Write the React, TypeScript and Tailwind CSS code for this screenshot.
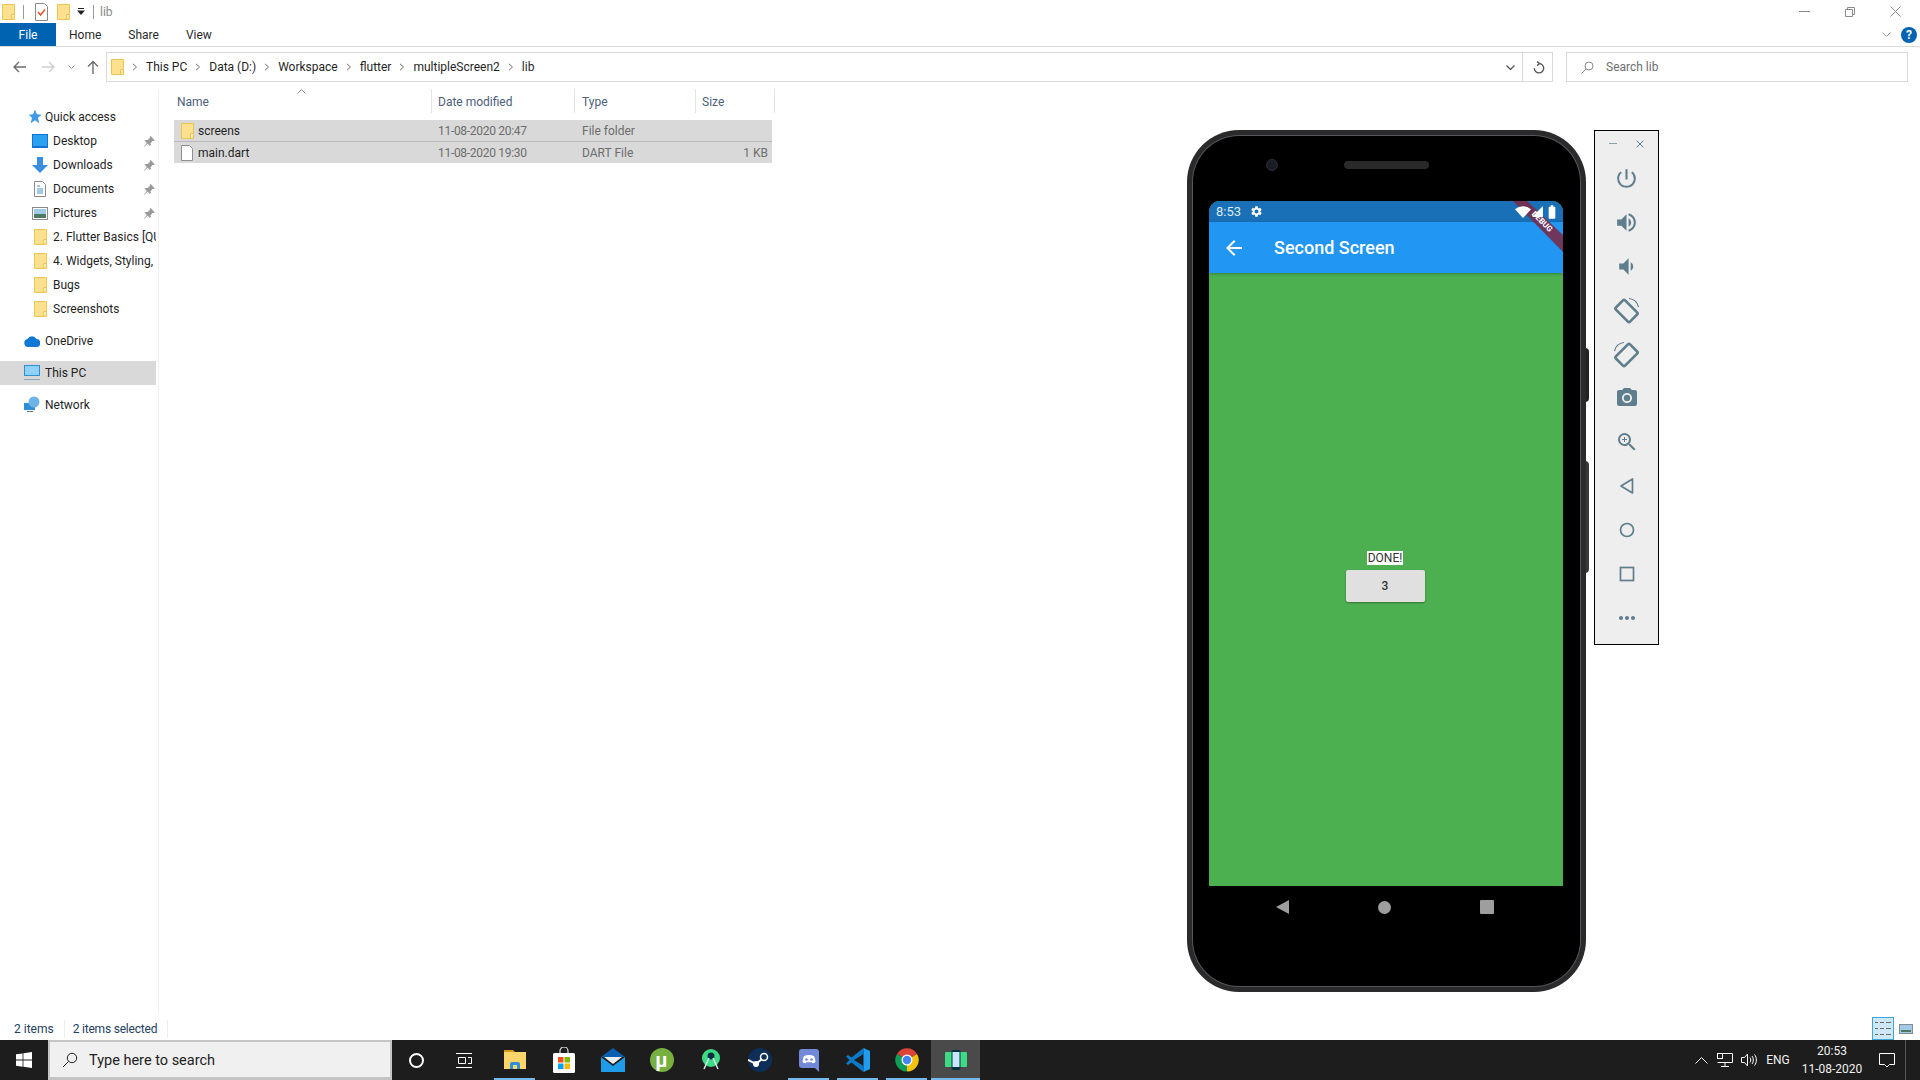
import type { ReactNode } from "react";
import {
  MdArrowBack,
  MdBatteryFull,
  MdCameraAlt,
  MdMoreHoriz,
  MdPowerSettingsNew,
  MdSettings,
  MdSignalCellular4Bar,
  MdVolumeDown,
  MdVolumeUp,
  MdZoomIn,
} from "react-icons/md";

const Folder = () => (
  <svg width="13" height="16" viewBox="0 0 13 16" className="shrink-0">
    <path d="M.5.5h12v15H.5z" fill="#ffe08f" stroke="#ebc452" />
    <path d="M9.5 15.5v-5h3" fill="#fff1c4" stroke="#ebc452" />
  </svg>
);

const FileIcon = () => (
  <svg width="12" height="16" viewBox="0 0 12 16" className="shrink-0">
    <path d="M.5.5h8l3 3v12H.5z" fill="#fff" stroke="#8f8f8f" />
  </svg>
);

const Pin = () => (
  <svg width="13" height="13" viewBox="0 0 12 12" className="shrink-0">
    <path d="M7 1l4 4-1 .6-1-.3-2 2.2.2 1.8-.8.8-2-2L1 11l-.2-.2 2.800-3.500-2-2 .8-.8 1.800.2 2.200-2-.3-1z" fill="#9a9a9a" />
  </svg>
);

const Chevron = () => (
  <svg width="6" height="8" viewBox="0 0 6 8" className="shrink-0">
    <path d="M1 .8L4.500 4 1 7.200" fill="none" stroke="#6f6f6f" />
  </svg>
);

const quickRows: { label: string; pinned: boolean; icon: ReactNode }[] = [
  {
    label: "Desktop",
    pinned: true,
    icon: (
      <svg width="16" height="14" viewBox="0 0 16 14">
        <rect width="16" height="14" fill="#0f75d3" />
        <rect x="1" y="1" width="14" height="11" fill="#2aa0f0" />
      </svg>
    ),
  },
  {
    label: "Downloads",
    pinned: true,
    icon: (
      <svg width="16" height="16" viewBox="0 0 16 16">
        <path d="M5 0h6v8h5l-8 8-8-8h5z" fill="#3a8ee0" />
      </svg>
    ),
  },
  {
    label: "Documents",
    pinned: true,
    icon: (
      <svg width="12" height="16" viewBox="0 0 12 16">
        <path d="M.5.5h8l3 3v12H.5z" fill="#fff" stroke="#8a8a8a" />
        <path d="M3 5h3M3 8h6M3 10h6M3 12h6" stroke="#4b93c9" />
      </svg>
    ),
  },
  {
    label: "Pictures",
    pinned: true,
    icon: (
      <svg width="16" height="13" viewBox="0 0 16 13">
        <rect x=".5" y=".5" width="15" height="12" fill="#fff" stroke="#8a8a8a" />
        <rect x="2" y="2" width="12" height="5" fill="#9fcbe8" />
        <rect x="2" y="7" width="12" height="4" fill="#4e7a63" />
      </svg>
    ),
  },
  { label: "2. Flutter Basics [QUIZ APP]", pinned: false, icon: <Folder /> },
  { label: "4. Widgets, Styling, Adding", pinned: false, icon: <Folder /> },
  { label: "Bugs", pinned: false, icon: <Folder /> },
  { label: "Screenshots", pinned: false, icon: <Folder /> },
];

const fileRows = [
  { name: "screens", date: "11-08-2020 20:47", type: "File folder", size: "", icon: <Folder /> },
  { name: "main.dart", date: "11-08-2020 19:30", type: "DART File", size: "1 KB", icon: <FileIcon /> },
];

const crumbs = ["This PC", "Data (D:)", "Workspace", "flutter", "multipleScreen2", "lib"];

const Sidebar = () => (
  <div className="w-[159px] shrink-0 border-r border-[#f0f0f0] pt-4 pr-[2px] mr-[15px] text-[#1f1f1f]">
    <div className="h-6 flex items-center pl-[26px] gap-[3px]">
      <svg width="16" height="16" viewBox="0 0 15 15">
        <path d="M8.500.5l1.700 4.500 4.500.3-3.500 3 1.200 5-4-2.700-4 2.700 1.200-5-3-3 4-.3z" fill="#3f9be6" />
      </svg>
      Quick access
    </div>
    {quickRows.map((r) => (
      <div key={r.label} className="h-6 flex items-center pl-8">
        <span className="w-4 shrink-0 flex justify-center mr-[5px]">{r.icon}</span>
        <span className="w-[103px] shrink-0 overflow-hidden whitespace-nowrap">{r.label}</span>
        {r.pinned && <span className="-ml-[13px]"><Pin /></span>}
      </div>
    ))}
    <div className="h-6 mt-2 flex items-center pl-6 gap-[5px]">
      <svg width="16" height="12" viewBox="0 0 16 12">
        <path d="M4 12a4 4 0 0 1-.500-7.900A5 5 0 0 1 12.500 4 4 4 0 0 1 12 12z" fill="#0f78d4" />
      </svg>
      OneDrive
    </div>
    <div className="h-6 mt-2 flex items-center pl-6 gap-[5px] bg-[#d9d9d9]">
      <svg width="16" height="16" viewBox="0 0 16 16">
        <rect width="16" height="11" fill="#2f8fd6" />
        <rect x="1" y="1" width="14" height="9" fill="#8fd0f5" />
        <rect y="14" width="16" height="1" fill="#8fa6b8" />
      </svg>
      This PC
    </div>
    <div className="h-6 mt-2 flex items-center pl-6 gap-[5px]">
      <svg width="16" height="18" viewBox="0 0 16 18">
        <rect y="7" width="11" height="7" fill="#2f8fd6" />
        <circle cx="10" cy="6" r="5.500" fill="#6fb4e8" />
        <rect x="3" y="15" width="6" height="1" fill="#5d7486" />
      </svg>
      Network
    </div>
  </div>
);

const FileList = () => (
  <div className="w-[602px]">
    <div className="h-6 flex text-[#4c607a] relative">
      <svg width="9" height="5" viewBox="0 0 9 5" className="absolute left-[123px] top-0">
        <path d="M.5 4.500L4.500.5l4 4" fill="none" stroke="#8a8a8a" />
      </svg>
      <div className="w-[258px] pl-[3px] pt-1 border-r border-[#e5e5e5]">Name</div>
      <div className="w-[143px] pl-[6px] pt-1 border-r border-[#e5e5e5]">Date modified</div>
      <div className="w-[121px] pl-[7px] pt-1 border-r border-[#e5e5e5]">Type</div>
      <div className="w-[79px] pl-[6px] pt-1 border-r border-[#e5e5e5]">Size</div>
    </div>
    <div className="mt-[7px] w-[598px] flex flex-col gap-px bg-[#b8b8b8]">
      {fileRows.map((f) => (
        <div key={f.name} className="h-[21px] bg-[#d9d9d9] flex items-center text-[#6d6d6d]">
          <div className="w-[258px] pl-[7px] flex items-center gap-[5px] text-[#1f1f1f]">
            <span className="w-3 flex justify-center">{f.icon}</span>
            {f.name}
          </div>
          <div className="w-[144px] pl-[6px] tracking-[-0.3px]">{f.date}</div>
          <div className="w-[120px] pl-[6px]">{f.type}</div>
          <div className="w-[72px] text-right">{f.size}</div>
        </div>
      ))}
    </div>
  </div>
);

const TitleBar = () => (
  <div className="h-[23px] flex items-center relative">
    <div className="pl-[2px] flex items-center">
      <Folder />
      <span className="ml-2 w-px h-[14px] bg-[#9a9a9a]" />
      <svg width="13" height="18" viewBox="0 0 13 18" className="ml-[11px]">
        <path d="M.5.5h9l3 3v14H.5z" fill="#fff" stroke="#8a8a8a" />
        <path d="M3 9l2.500 3L10 6.500" fill="none" stroke="#e2562c" strokeWidth="1.500" />
      </svg>
      <span className="ml-[9px]"><Folder /></span>
      <svg width="8" height="7" viewBox="0 0 8 7" className="ml-[7px]">
        <path d="M1 0h6v1H1zM0 2.500h8L4 7z" fill="#222" />
      </svg>
      <span className="ml-2 w-px h-[14px] bg-[#9a9a9a]" />
      <span className="ml-[6px] text-[#8a8a8a]">lib</span>
    </div>
    <div className="ml-auto flex items-center h-full pr-px">
      <span className="w-[46px] flex justify-center">
        <svg width="11" height="1"><rect width="11" height="1" fill="#8a8a8a" /></svg>
      </span>
      <span className="w-[46px] flex justify-center">
        <svg width="10" height="10" viewBox="0 0 10 10">
          <path d="M.5 2.500h7v7h-7zM2.500 2.500v-2h7v7h-2" fill="none" stroke="#8a8a8a" />
        </svg>
      </span>
      <span className="w-[46px] pr-[2px] flex justify-center">
        <svg width="11" height="11" viewBox="0 0 11 11">
          <path d="M.5.5l10 10M10.500.5l-10 10" stroke="#8a8a8a" />
        </svg>
      </span>
    </div>
  </div>
);

const TabRow = () => (
  <div className="h-6 flex border-b border-[#dadada]">
    <div className="w-14 h-[23px] bg-[#0063b1] text-white flex items-center justify-center">File</div>
    <div className="flex items-center h-[23px] pl-[13px] gap-[27px] text-[#2a2a2a]">
      <span>Home</span>
      <span>Share</span>
      <span>View</span>
    </div>
    <div className="ml-auto flex items-center h-[23px] gap-[10px] pr-[3px]">
      <svg width="9" height="5" viewBox="0 0 9 5">
        <path d="M.5.5l4 4 4-4" fill="none" stroke="#9a9a9a" />
      </svg>
      <span className="w-4 h-4 rounded-full bg-[#0063b1] text-white font-bold text-[12px] flex items-center justify-center">?</span>
    </div>
  </div>
);

const AddressRow = () => (
  <div className="h-[42px] pt-[5px] flex items-start">
    <div className="w-[106px] h-[30px] flex items-center shrink-0">
      <svg width="13" height="12" viewBox="0 0 13 12" className="ml-[13px]">
        <path d="M13 6H1.500M6 1L1 6l5 5" fill="none" stroke="#6d6d6d" strokeWidth="1.400" />
      </svg>
      <svg width="13" height="12" viewBox="0 0 13 12" className="ml-4">
        <path d="M0 6h11.500M7 1l5 5-5 5" fill="none" stroke="#d0d0d0" strokeWidth="1.400" />
      </svg>
      <svg width="7" height="5" viewBox="0 0 7 5" className="ml-[13px]">
        <path d="M.5.5l3 3 3-3" fill="none" stroke="#8a8a8a" />
      </svg>
      <svg width="12" height="14" viewBox="0 0 12 14" className="ml-3">
        <path d="M6 14V1.500M1 6.500l5-5 5 5" fill="none" stroke="#6d6d6d" strokeWidth="1.400" />
      </svg>
    </div>
    <div className="w-[1447px] h-[30px] border border-[#d9d9d9] flex items-center shrink-0">
      <span className="ml-1"><Folder /></span>
      <div className="flex items-center ml-[8px] gap-2 text-[#1f1f1f]">
        {crumbs.map((c) => (
          <span key={c} className="flex items-center gap-2">
            <Chevron />
            {c}
          </span>
        ))}
      </div>
      <div className="ml-auto h-full flex items-center">
        <span className="w-[24px] flex justify-center">
          <svg width="9" height="5" viewBox="0 0 9 5">
            <path d="M.5.5l4 4 4-4" fill="none" stroke="#555" strokeWidth="1.300" />
          </svg>
        </span>
        <span className="w-[30px] h-full border-l border-[#d9d9d9] flex items-center justify-center">
          <svg width="12" height="13" viewBox="0 0 12 13" className="ml-[2px]">
            <path d="M6 2.500a4.700 4.700 0 1 1-4.700 4.700M4 .5l2.500 2L4 4.700" fill="none" stroke="#555" strokeWidth="1.400" />
          </svg>
        </span>
      </div>
    </div>
    <div className="ml-[13px] w-[342px] h-[30px] border border-[#d9d9d9] flex items-center pl-[14px] gap-3 text-[#6d6d6d] shrink-0">
      <svg width="13" height="13" viewBox="0 0 13 13">
        <circle cx="8" cy="5" r="4" fill="none" stroke="#8a8a8a" />
        <path d="M5 8l-4.500 4.500" stroke="#8a8a8a" />
      </svg>
      Search lib
    </div>
  </div>
);

const StatusBar = () => (
  <div className="h-7 flex items-center text-[#24405f] relative">
    <div className="flex items-center pt-[5px]">
      <span className="pl-[14px] pr-[10px] border-r border-[#eeeeee]">2 items</span>
      <span className="pl-2 pr-[10px] border-r border-[#eeeeee] tracking-[-0.2px]">2 items selected</span>
    </div>
    <div className="ml-auto flex items-end h-full pt-[5px] pr-[3px] gap-[1px]">
      <span className="w-[22px] h-[23px] bg-[#cce8f6] border border-[#3fa6d8] flex items-center justify-center">
        <svg width="16" height="13" viewBox="0 0 16 13">
          <path d="M0 .5h3M5 .5h4M11 .5h5M0 6.500h3M5 6.500h4M11 6.500h5M0 12.500h3M5 12.500h4M11 12.500h5" stroke="#6a6a6a" />
        </svg>
      </span>
      <span className="w-[22px] h-[23px] flex items-center justify-center">
        <svg width="14" height="10" viewBox="0 0 14 10">
          <rect x=".5" y=".5" width="13" height="9" fill="#9fcbe8" stroke="#8a8a8a" />
          <rect x="2" y="6" width="10" height="2" fill="#4e7a63" />
        </svg>
      </span>
    </div>
  </div>
);

const RotateIcon = ({ flip }: { flip?: boolean }) => (
  <svg width="27" height="27" viewBox="0 0 27 27" className={flip ? "-scale-x-100" : ""}>
    <rect x="7" y="4" width="13" height="20" rx="1.500" transform="rotate(-45 13.500 14)" fill="none" stroke="#5f7d8c" strokeWidth="2.600" />
    <path d="M16 1.500a11 11 0 0 1 9.500 8.500" fill="none" stroke="#5f7d8c" strokeWidth="1.200" />
  </svg>
);

const panelIcons: ReactNode[] = [
  <MdPowerSettingsNew key="power" size={25} color="#5f7d8c" />,
  <MdVolumeUp key="up" size={25} color="#5f7d8c" />,
  <MdVolumeDown key="down" size={25} color="#5f7d8c" />,
  <RotateIcon key="right" />,
  <RotateIcon key="left" flip />,
  <MdCameraAlt key="camera" size={24} color="#5f7d8c" />,
  <MdZoomIn key="zoom" size={24} color="#5f7d8c" />,
  <svg key="back" width="16" height="18" viewBox="0 0 16 18">
    <path d="M13.500 2v14L2 9z" fill="none" stroke="#5f7d8c" strokeWidth="1.700" strokeLinejoin="round" />
  </svg>,
  <svg key="home" width="16" height="16" viewBox="0 0 16 16">
    <circle cx="8" cy="8" r="6.500" fill="none" stroke="#5f7d8c" strokeWidth="1.700" />
  </svg>,
  <svg key="square" width="16" height="16" viewBox="0 0 16 16">
    <rect x="1.500" y="1.500" width="13" height="13" fill="none" stroke="#5f7d8c" strokeWidth="1.700" />
  </svg>,
  <MdMoreHoriz key="more" size={24} color="#5f7d8c" />,
];

const EmulatorPanel = () => (
  <div className="absolute left-[1594px] top-[130px] w-[65px] h-[515px] border border-black bg-[#eeeeee] flex flex-col items-center">
    <div className="h-[25px] w-full flex items-center justify-center gap-[19px] shrink-0">
      <svg width="8" height="1"><rect width="8" height="1" fill="#8ba2ae" /></svg>
      <svg width="8" height="8" viewBox="0 0 8 8">
        <path d="M.5.5l7 7M7.500.5l-7 7" stroke="#5f7d8c" />
      </svg>
    </div>
    {panelIcons.map((icon, i) => (
      <div key={i} className="h-11 w-full flex items-center justify-center shrink-0">
        {icon}
      </div>
    ))}
  </div>
);

const PhoneScreen = () => (
  <div className="relative h-[685px] rounded-t-[11px] overflow-hidden bg-[#4caf50] flex flex-col font-['Roboto',sans-serif]">
    <div className="h-[21px] bg-[#1970b6] flex items-center pl-[7px] text-[#dce9f5] text-[13px] shrink-0">
      <span>8:53</span>
      <span className="ml-[9px]"><MdSettings size={13} color="#fff" /></span>
    </div>
    <div className="h-[51px] bg-[#2196f3] flex items-center pl-[13px] text-white shadow-[0_1px_3px_rgba(0,0,0,0.25)] shrink-0">
      <MdArrowBack size={24} />
      <span className="ml-[28px] text-[18px] font-medium">Second Screen</span>
    </div>
    <div className="flex-1 flex flex-col items-center pt-[278px] pr-[2px]">
      <span className="h-[14px] px-px bg-white text-[#333] text-[12px] leading-[14px] flex items-center">DONE!</span>
      <div className="mt-[5px] w-[79px] h-8 rounded-[2px] bg-[#e0e0e0] text-[#333] text-[12px] font-medium flex items-center justify-center shadow-[0_1px_2px_rgba(0,0,0,0.35)]">
        3
      </div>
    </div>
    {/* debug banner, status icons sit over it */}
    <svg width="60" height="60" viewBox="0 0 60 60" className="absolute right-0 top-0">
      <path d="M10 0h14l36 34v17z" fill="#7a2a47" fillOpacity="0.88" />
    </svg>
    <span className="absolute right-[3px] top-0 h-[21px] flex items-center">
      <svg width="16" height="12" viewBox="0 0 16 12">
        <path d="M0 3.200a12 12 0 0 1 16 0L8 12z" fill="#fff" />
      </svg>
      <MdSignalCellular4Bar size={13} color="#fff" />
      <MdBatteryFull size={16} color="#fff" />
    </span>
    <span className="absolute right-[8px] top-[15px] rotate-45 text-white text-[8px] leading-3 font-bold">DEBUG</span>
  </div>
);

const Phone = () => (
  <div className="absolute left-[1187px] top-[130px] w-[399px] h-[862px]">
    <div className="absolute right-[-3px] top-[218px] w-1 h-[54px] bg-[#222] rounded-r-sm" />
    <div className="absolute right-[-3px] top-[331px] w-1 h-[112px] bg-[#3a3a3a] rounded-r-sm" />
    <div className="relative h-full rounded-[52px] bg-[#2a2a2a] p-[5px]">
      <div className="h-full rounded-[47px] bg-[#55555c] p-px">
        <div className="h-full rounded-[46px] bg-black pl-4 pr-[17px] pt-[65px] flex flex-col">
          <PhoneScreen />
          <div className="h-[42px] flex items-center justify-between pl-[67px] pr-[69px]">
            <svg width="13" height="14" viewBox="0 0 13 14"><path d="M13 0v14L0 7z" fill="#9e9e9e" /></svg>
            <span className="w-[13px] h-[13px] rounded-full bg-[#9e9e9e]" />
            <span className="w-[14px] h-[14px] rounded-[1px] bg-[#9e9e9e]" />
          </div>
        </div>
      </div>
    </div>
    <span className="absolute left-[79px] top-[29px] w-3 h-3 rounded-full bg-[#1c1c24] border border-[#2c2c34]" />
    <span className="absolute left-[157px] top-[31px] w-[85px] h-2 rounded-full bg-[#2a2a2a]" />
  </div>
);

const WindowsLogo = () => (
  <svg width="16" height="16" viewBox="0 0 16 16">
    <path d="M0 2.300l6.600-.9v6.200H0zM7.400 1.300L16 0v7.600H7.400zM0 8.400h6.600v6.300L0 13.800zM7.400 8.400H16V16l-8.600-1.200z" fill="#fff" />
  </svg>
);

const apps: { id: string; open?: boolean; active?: boolean; icon: ReactNode }[] = [
  {
    id: "explorer",
    open: true,
    icon: (
      <svg width="24" height="22" viewBox="0 0 24 22">
        <path d="M1 1h9l2 2H1z" fill="#d99a16" />
        <rect x="1" y="3" width="22" height="17" fill="#fcd56b" />
        <path d="M7 20v-5a2 2 0 0 1 2-2h6a2 2 0 0 1 2 2v5h-3v-4h-4v4z" fill="#2f8fd8" />
      </svg>
    ),
  },
  {
    id: "store",
    icon: (
      <svg width="24" height="26" viewBox="0 0 24 26">
        <path d="M8 7V4a4 4 0 0 1 8 0v3" fill="none" stroke="#ddd" strokeWidth="1.200" />
        <rect x="1" y="6" width="22" height="20" rx="1.500" fill="#fff" />
        <rect x="6" y="10" width="5.500" height="5.500" fill="#f25022" />
        <rect x="12.500" y="10" width="5.500" height="5.500" fill="#7fba00" />
        <rect x="6" y="16.500" width="5.500" height="5.500" fill="#00a4ef" />
        <rect x="12.500" y="16.500" width="5.500" height="5.500" fill="#ffb900" />
      </svg>
    ),
  },
  {
    id: "mail",
    icon: (
      <svg width="24" height="24" viewBox="0 0 24 24">
        <path d="M0 9L12 0l12 9z" fill="#0a5fb0" />
        <path d="M3 9h18l-9 7z" fill="#e8eef4" />
        <path d="M0 9l12 9 12-9v15H0z" fill="#1e9ce8" />
      </svg>
    ),
  },
  {
    id: "utorrent",
    icon: (
      <span className="w-6 h-6 rounded-full bg-[#76b041] text-white font-bold text-[20px] leading-none flex items-center justify-center">µ</span>
    ),
  },
  {
    id: "studio",
    icon: (
      <svg width="20" height="22" viewBox="0 0 20 22">
        <circle cx="10" cy="9" r="9" fill="#3ddc84" />
        <circle cx="10" cy="7" r="3.500" fill="#073042" />
        <path d="M8 9l-5 11M12 9l5 11" stroke="#d7e7ee" strokeWidth="1.500" />
      </svg>
    ),
  },
  {
    id: "steam",
    icon: (
      <svg width="24" height="24" viewBox="0 0 24 24">
        <circle cx="12" cy="12" r="12" fill="#0d2f57" />
        <circle cx="16" cy="9" r="3.500" fill="none" stroke="#fff" strokeWidth="1.500" />
        <circle cx="8" cy="16" r="3" fill="#fff" />
        <path d="M0 12l8 4 6-5" stroke="#fff" strokeWidth="2" fill="none" />
      </svg>
    ),
  },
  {
    id: "discord",
    open: true,
    icon: (
      <svg width="20" height="23" viewBox="0 0 20 23">
        <path d="M3 0h14a3 3 0 0 1 3 3v20l-4-4H3a3 3 0 0 1-3-3V3a3 3 0 0 1 3-3z" fill="#7289da" />
        <path d="M5 7c3-1.500 7-1.500 10 0 1 2 1.500 4 1.500 6-1 .8-2 1.200-3 1.300l-.8-1.100H7.300l-.8 1.100c-1-.1-2-.5-3-1.300 0-2 .5-4 1.500-6z" fill="#fff" />
        <circle cx="7.500" cy="10.500" r="1.300" fill="#7289da" />
        <circle cx="12.500" cy="10.500" r="1.300" fill="#7289da" />
      </svg>
    ),
  },
  {
    id: "vscode",
    open: true,
    icon: (
      <svg width="24" height="24" viewBox="0 0 24 24">
        <path d="M17.500 0L24 3v18l-6.500 3z" fill="#1f9cf0" />
        <path d="M17.500 0v6L8 12l9.500 6v6L5.500 14.500 2 17 0 15.500 3.500 12 0 8.500 2 7l3.500 2.500z" fill="#0b7ac9" />
      </svg>
    ),
  },
  {
    id: "chrome",
    open: true,
    icon: (
      <svg width="24" height="24" viewBox="0 0 24 24">
        <path d="M12 12L2 6a11.500 11.500 0 0 1 20 0z" fill="#db4437" />
        <path d="M12 12l10-6a11.500 11.500 0 0 1-10 17.500z" fill="#f4c20d" />
        <path d="M12 12v11.500A11.500 11.500 0 0 1 2 6z" fill="#0f9d58" />
        <circle cx="12" cy="12" r="5.500" fill="#fff" />
        <circle cx="12" cy="12" r="4.200" fill="#4285f4" />
      </svg>
    ),
  },
  {
    id: "emulator",
    open: true,
    active: true,
    icon: (
      <svg width="22" height="22" viewBox="0 0 22 22">
        <rect y="3" width="22" height="15" rx="1" fill="#3ddc84" />
        <rect x="6.500" y="1" width="9" height="20" rx="2" fill="#073042" />
        <rect x="7.500" y="3" width="7" height="15" fill="#c8e6fa" />
      </svg>
    ),
  },
];

const Taskbar = () => (
  <div className="h-10 bg-[#1d1d1d] flex items-stretch text-white">
    <div className="w-12 flex items-center justify-center"><WindowsLogo /></div>
    <div className="w-[344px] bg-[#f0f0f0] border-2 border-b-[3px] border-[#c4c4c4] flex items-center pl-3 text-[#222] text-[14.500px]">
      <svg width="16" height="16" viewBox="0 0 16 16">
        <circle cx="10" cy="6" r="4.700" fill="none" stroke="#222" />
        <path d="M6.500 9.500L1 15" stroke="#222" />
      </svg>
      <span className="ml-[11px] pt-[2px]">Type here to search</span>
    </div>
    <div className="w-[49px] flex items-center justify-center">
      <span className="w-[15px] h-[15px] rounded-full border-[2.500px] border-white" />
    </div>
    <div className="w-[49px] flex items-center justify-center pr-[3px]">
      <svg width="16" height="15" viewBox="0 0 16 15">
        <path d="M0 .5h16M0 14.500h16M2.500 4.500h7v6h-7zM12 4.500h3.500v6H12" fill="none" stroke="#fff" />
      </svg>
    </div>
    {apps.map((a) => (
      <div
        key={a.id}
        className={a.active ? "w-[49px] flex items-center justify-center relative bg-[#4a4a4a]" : "w-[49px] flex items-center justify-center relative"}
      >
        {a.icon}
        {a.open && (
          <span className={a.active ? "absolute bottom-0 inset-x-0 h-[2px] bg-[#76b9ed]" : "absolute bottom-0 inset-x-1 h-[2px] bg-[#76b9ed]"} />
        )}
      </div>
    ))}
    <div className="ml-auto flex items-center text-[#f0f0f0] text-[12px]">
      <span className="w-6 flex justify-center">
        <svg width="13" height="7" viewBox="0 0 13 7"><path d="M.5 6.500l6-6 6 6" fill="none" stroke="#fff" /></svg>
      </span>
      <span className="w-6 flex justify-center">
        <svg width="16" height="14" viewBox="0 0 16 14">
          <path d="M3 .5h12.500v9H.5M8 9.500v4M4 13.500h8" fill="none" stroke="#fff" />
          <rect x=".5" y=".5" width="5" height="5" fill="#1d1d1d" stroke="#fff" />
        </svg>
      </span>
      <span className="w-6 flex justify-center">
        <svg width="16" height="14" viewBox="0 0 16 14">
          <path d="M.5 4.500h3l3-3.500v12l-3-3.500h-3zM9 4.500c1 1.500 1 3.500 0 5M11 3c1.800 2 1.800 6 0 8M13.500 1.500c2.500 3 2.500 8 0 11" fill="none" stroke="#fff" />
        </svg>
      </span>
      <span className="w-[34px] text-center">ENG</span>
      <span className="w-[74px] text-center leading-[18px]">
        20:53
        <br />
        11-08-2020
      </span>
      <span className="w-9 flex justify-center">
        <svg width="16" height="15" viewBox="0 0 16 15">
          <path d="M.5.5h15v11h-5l-2.500 2.500-2.500-2.500h-5z" fill="none" stroke="#fff" />
        </svg>
      </span>
      <span className="w-[15px] h-full border-l border-[#5a5a5a]" />
    </div>
  </div>
);

export default function App() {
  return (
    <div className="relative w-[1920px] h-[1080px] overflow-hidden bg-white flex flex-col text-[12px] font-['Roboto',sans-serif]">
      <TitleBar />
      <TabRow />
      <AddressRow />
      <div className="flex-1 flex min-h-0">
        <Sidebar />
        <FileList />
      </div>
      <StatusBar />
      <Taskbar />
      <Phone />
      <EmulatorPanel />
    </div>
  );
}
